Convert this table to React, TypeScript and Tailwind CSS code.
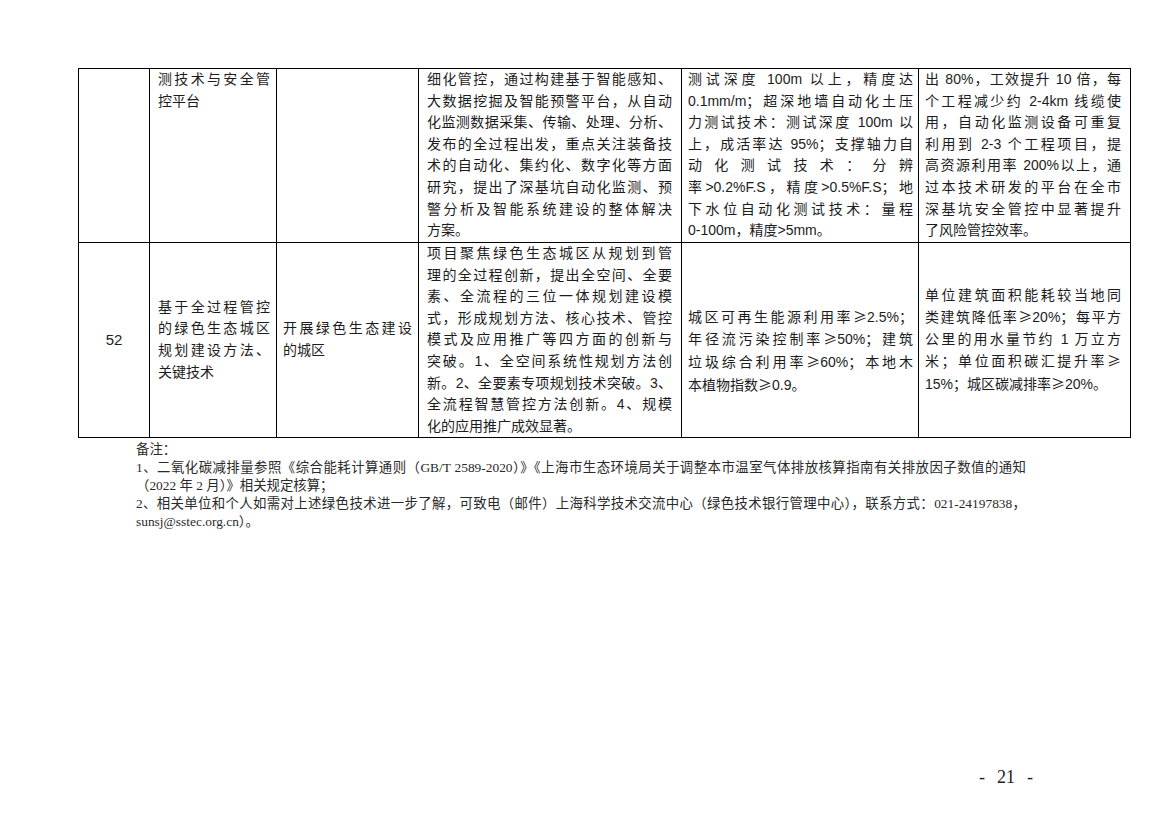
import React from "react";

function renderText(s: string) {
  const parts = s.split("≥");
  return parts.map((p, i) => (
    <React.Fragment key={i}>
      {i > 0 && <span className="font-['Noto_Sans_CJK_SC',sans-serif]">≥</span>}
      {p}
    </React.Fragment>
  ));
}

function Lines({ lines }: { lines: string[] }) {
  return (
    <>
      {lines.map((l, i) => (
        <div
          key={i}
          className={
            i < lines.length - 1
              ? "text-justify [text-align-last:justify]"
              : "text-left"
          }
        >
          {renderText(l)}
        </div>
      ))}
    </>
  );
}

const r1c2 = ["测技术与安全管", "控平台"];
const r1c4 = [
  "细化管控，通过构建基于智能感知、",
  "大数据挖掘及智能预警平台，从自动",
  "化监测数据采集、传输、处理、分析、",
  "发布的全过程出发，重点关注装备技",
  "术的自动化、集约化、数字化等方面",
  "研究，提出了深基坑自动化监测、预",
  "警分析及智能系统建设的整体解决",
  "方案。",
];
const r1c5 = [
  "测试深度 100m 以上，精度达",
  "0.1mm/m；超深地墙自动化土压",
  "力测试技术：测试深度 100m 以",
  "上，成活率达 95%；支撑轴力自",
  "动化测试技术：分辨",
  "率>0.2%F.S，精度>0.5%F.S；地",
  "下水位自动化测试技术：量程",
  "0-100m，精度>5mm。",
];
const r1c6 = [
  "出 80%，工效提升 10 倍，每",
  "个工程减少约 2-4km 线缆使",
  "用，自动化监测设备可重复",
  "利用到 2-3 个工程项目，提",
  "高资源利用率 200%以上，通",
  "过本技术研发的平台在全市",
  "深基坑安全管控中显著提升",
  "了风险管控效率。",
];
const r2c2 = ["基于全过程管控", "的绿色生态城区", "规划建设方法、", "关键技术"];
const r2c3 = ["开展绿色生态建设", "的城区"];
const r2c4 = [
  "项目聚焦绿色生态城区从规划到管",
  "理的全过程创新，提出全空间、全要",
  "素、全流程的三位一体规划建设模",
  "式，形成规划方法、核心技术、管控",
  "模式及应用推广等四方面的创新与",
  "突破。1、全空间系统性规划方法创",
  "新。2、全要素专项规划技术突破。3、",
  "全流程智慧管控方法创新。4、规模",
  "化的应用推广成效显著。",
];
const r2c5 = [
  "城区可再生能源利用率≥2.5%；",
  "年径流污染控制率≥50%；建筑",
  "垃圾综合利用率≥60%；本地木",
  "本植物指数≥0.9。",
];
const r2c6 = [
  "单位建筑面积能耗较当地同",
  "类建筑降低率≥20%；每平方",
  "公里的用水量节约 1 万立方",
  "米；单位面积碳汇提升率≥",
  "15%；城区碳减排率≥20%。",
];

export default function App() {
  return (
    <div className="w-[1169px] h-[826px] bg-white flex flex-col text-[#1c1c1c] overflow-hidden">
      {/* Table */}
      <div className="mt-[68px] ml-[78px] w-[1053px] grid grid-cols-[71px_127px_142px_263px_237px_212px] grid-rows-[174px_195px] border-l border-t border-black font-['Liberation_Sans','Noto_Sans_CJK_SC',sans-serif] text-[14px] leading-[21.6px]">
        {/* Row 1 */}
        <div className="border-r border-b border-black" />
        <div className="border-r border-b border-black pl-[8px] pr-[6px]">
          <Lines lines={r1c2} />
        </div>
        <div className="border-r border-b border-black" />
        <div className="border-r border-b border-black pl-[8px] pr-[9px]">
          <Lines lines={r1c4} />
        </div>
        <div className="border-r border-b border-black pl-[6px] pr-[5px]">
          <Lines lines={r1c5} />
        </div>
        <div className="border-r border-b border-black pl-[6px] pr-[9px]">
          <Lines lines={r1c6} />
        </div>

        {/* Row 2 */}
        <div className="border-r border-b border-black flex items-center justify-center text-[15px]">
          52
        </div>
        <div className="border-r border-b border-black pl-[8px] pr-[6px] flex flex-col justify-center">
          <Lines lines={r2c2} />
        </div>
        <div className="border-r border-b border-black pl-[6px] pr-[6px] flex flex-col justify-center">
          <Lines lines={r2c3} />
        </div>
        <div className="border-r border-b border-black pl-[8px] pr-[9px]">
          <Lines lines={r2c4} />
        </div>
        <div className="border-r border-b border-black pl-[6px] pr-[5px] pt-[22px] flex flex-col justify-center">
          <Lines lines={r2c5} />
        </div>
        <div className="border-r border-b border-black pl-[6px] pr-[9px] flex flex-col justify-center">
          <Lines lines={r2c6} />
        </div>
      </div>

      {/* Notes */}
      <div className="mt-[3px] ml-[136px] w-[890px] font-['Liberation_Serif','Noto_Sans_CJK_SC',serif] text-[13.4px] leading-[18px] text-[#2a2a2a]">
        <div>备注：</div>
        <div className="text-justify [text-align-last:justify]">
          1、二氧化碳减排量参照《综合能耗计算通则（GB/T 2589-2020）》《上海市生态环境局关于调整本市温室气体排放核算指南有关排放因子数值的通知
        </div>
        <div>（2022 年 2 月）》相关规定核算；</div>
        <div className="text-justify [text-align-last:justify]">
          2、相关单位和个人如需对上述绿色技术进一步了解，可致电（邮件）上海科学技术交流中心（绿色技术银行管理中心），联系方式：021-24197838，
        </div>
        <div>sunsj@sstec.org.cn）。</div>
      </div>

      {/* Page number */}
      <div className="mt-[234px] flex justify-end pr-[136px] font-['Liberation_Serif',serif] text-[18px] leading-[24px] text-[#222]">
        <div className="flex items-center gap-[12px]">
          <span>-</span>
          <span>21</span>
          <span>-</span>
        </div>
      </div>
    </div>
  );
}
